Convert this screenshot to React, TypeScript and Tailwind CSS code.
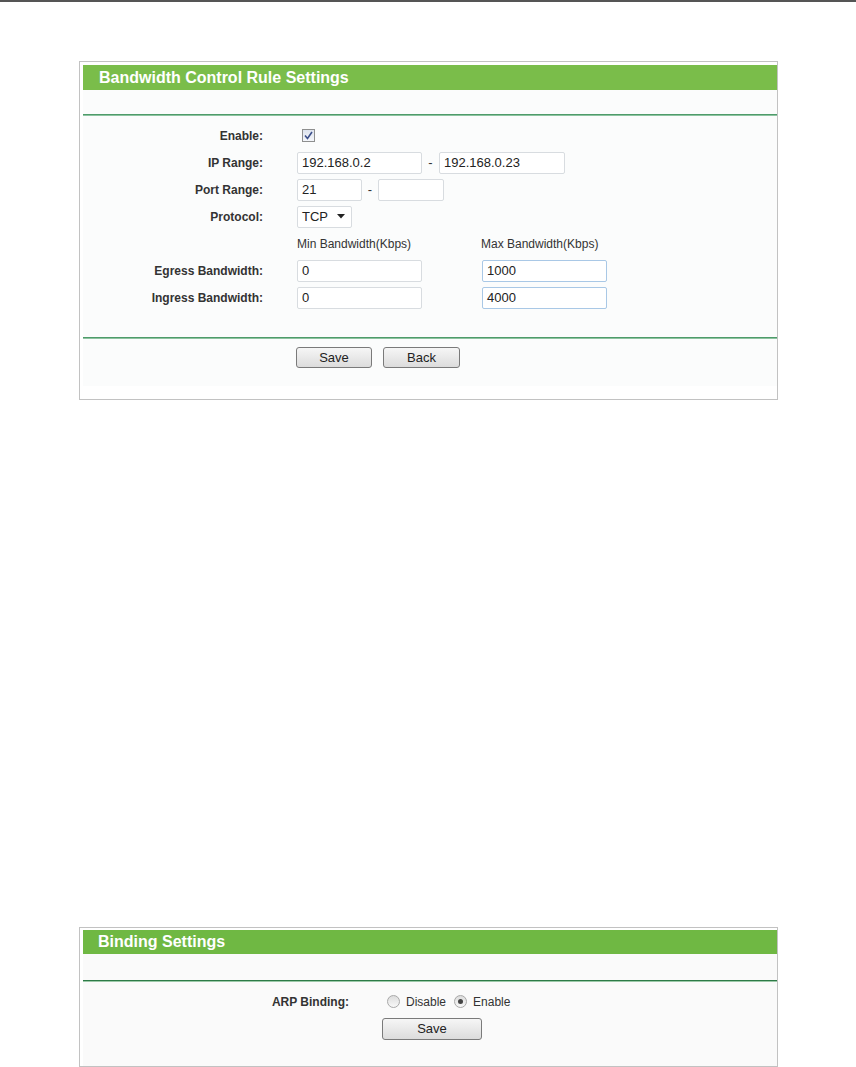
import React from "react";

const font = { fontFamily: '"Liberation Sans", Arial, sans-serif' };

function Input({ value, w, blue }: { value?: string; w: string; blue?: boolean }) {
  return (
    <div
      className={`h-[22px] ${w} border ${blue ? "border-[#a9c8e6]" : "border-[#d8dce0]"} bg-white rounded-[2px] flex items-center pl-[4px] text-[13px] text-[#222] leading-none`}
    >
      {value}
    </div>
  );
}

function Label({ children, w }: { children: React.ReactNode; w: string }) {
  return (
    <div className={`${w} shrink-0 text-right text-[12px] font-bold text-[#333]`}>{children}</div>
  );
}

function Button({ children, w, h }: { children: React.ReactNode; w: string; h: string }) {
  return (
    <div
      className={`${w} ${h} border border-[#7a7a7a] rounded-[3px] bg-gradient-to-b from-[#f6f6f6] to-[#dcdcdc] flex items-center justify-center text-[13px] text-[#222]`}
    >
      {children}
    </div>
  );
}

function Radio({ checked }: { checked?: boolean }) {
  return (
    <div className="w-[13px] h-[13px] rounded-full border border-[#a8a8a8] bg-gradient-to-b from-[#dcdcdc] to-[#f8f8f8] flex items-center justify-center">
      {checked && <div className="w-[5px] h-[5px] rounded-full bg-[#444]" />}
    </div>
  );
}

export default function App() {
  return (
    <div className="w-[856px] h-[1067px] bg-white relative" style={font}>
      <div className="h-[2px] bg-[#555]" />
      {/* Panel 1 */}
      <div className="ml-[79px] mt-[59px] w-[699px] border border-[#c2c2c2] bg-white pt-[3px] pl-[3px] pb-[13px]">
        <div className="h-[25px] bg-[#7abd4a] flex items-center pl-[16px] text-white font-bold text-[16px]">
          Bandwidth Control Rule Settings
        </div>
        <div className="bg-[#fbfcfc]">
          <div className="h-[24px]" />
          <div className="h-[2px] bg-[#4e9b6a] border-b border-[#8cc3a0]" />
          <div className="pt-[6px] flex flex-col">
            <div className="h-[27px] flex items-center">
              <Label w="w-[180px]">Enable:</Label>
              <div className="ml-[39px] w-[13px] h-[13px] border border-[#8e8f8f] bg-gradient-to-b from-[#dde3ee] to-[#f4f6fa] flex items-center justify-center">
                <svg width="9" height="9" viewBox="0 0 9 9">
                  <path d="M1 4.5 L3.5 7.5 L8 1" fill="none" stroke="#3b4f8a" strokeWidth="1.6" />
                </svg>
              </div>
            </div>
            <div className="h-[27px] flex items-center">
              <Label w="w-[180px]">IP Range:</Label>
              <div className="ml-[34px] flex items-center">
                <Input value="192.168.0.2" w="w-[125px]" />
                <span className="w-[17px] text-center text-[13px] text-[#333]">-</span>
                <Input value="192.168.0.23" w="w-[126px]" />
              </div>
            </div>
            <div className="h-[27px] flex items-center">
              <Label w="w-[180px]">Port Range:</Label>
              <div className="ml-[34px] flex items-center">
                <Input value="21" w="w-[65px]" />
                <span className="w-[16px] text-center text-[13px] text-[#333]">-</span>
                <Input w="w-[66px]" />
              </div>
            </div>
            <div className="h-[27px] flex items-center">
              <Label w="w-[180px]">Protocol:</Label>
              <div className="ml-[34px] h-[22px] w-[55px] border border-[#d8dce0] bg-white rounded-[2px] flex items-center pl-[4px] text-[13px] text-[#222]">
                TCP
                <svg className="ml-[9px]" width="8" height="5" viewBox="0 0 8 5">
                  <path d="M0 0 H8 L4 4.5 Z" fill="#222" />
                </svg>
              </div>
            </div>
            <div className="h-[27px] flex items-center text-[12px] text-[#333]">
              <div className="w-[180px] shrink-0" />
              <div className="ml-[34px] w-[184px]">Min Bandwidth(Kbps)</div>
              <div>Max Bandwidth(Kbps)</div>
            </div>
            <div className="h-[27px] flex items-center">
              <Label w="w-[180px]">Egress Bandwidth:</Label>
              <div className="ml-[34px] flex items-center">
                <Input value="0" w="w-[125px]" />
                <div className="w-[60px]" />
                <Input value="1000" w="w-[125px]" blue />
              </div>
            </div>
            <div className="h-[27px] flex items-center">
              <Label w="w-[180px]">Ingress Bandwidth:</Label>
              <div className="ml-[34px] flex items-center">
                <Input value="0" w="w-[125px]" />
                <div className="w-[60px]" />
                <Input value="4000" w="w-[125px]" blue />
              </div>
            </div>
          </div>
          <div className="h-[26px]" />
          <div className="h-[2px] bg-[#4e9b6a] border-b border-[#8cc3a0]" />
          <div className="pt-[8px] pb-[18px] flex items-center pl-[213px] gap-[11px]">
            <Button w="w-[76px]" h="h-[21px]">Save</Button>
            <Button w="w-[77px]" h="h-[21px]">Back</Button>
          </div>
        </div>
      </div>

      {/* Panel 2 */}
      <div className="ml-[79px] mt-[527px] w-[699px] h-[140px] border border-[#c2c2c2] bg-white pt-[2px] pl-[3px] flex flex-col">
        <div className="h-[24px] bg-[#6fb843] flex items-center pl-[15px] text-white font-bold text-[16px]">
          Binding Settings
        </div>
        <div className="bg-[#fafafa] flex-1 flex flex-col">
          <div className="h-[26px]" />
          <div className="h-[2px] bg-[#2d7a47] border-b border-[#9cc9a8]" />
          <div className="pt-[9px] flex items-center h-[30px]">
            <Label w="w-[266px]">ARP Binding:</Label>
            <div className="ml-[38px] flex items-center text-[12px] text-[#333]">
              <Radio />
              <span className="ml-[6px]">Disable</span>
              <div className="ml-[8px]"><Radio checked /></div>
              <span className="ml-[6px]">Enable</span>
            </div>
          </div>
          <div className="pl-[299px] pt-[6px]">
            <Button w="w-[100px]" h="h-[22px]">Save</Button>
          </div>
        </div>
      </div>
    </div>
  );
}
